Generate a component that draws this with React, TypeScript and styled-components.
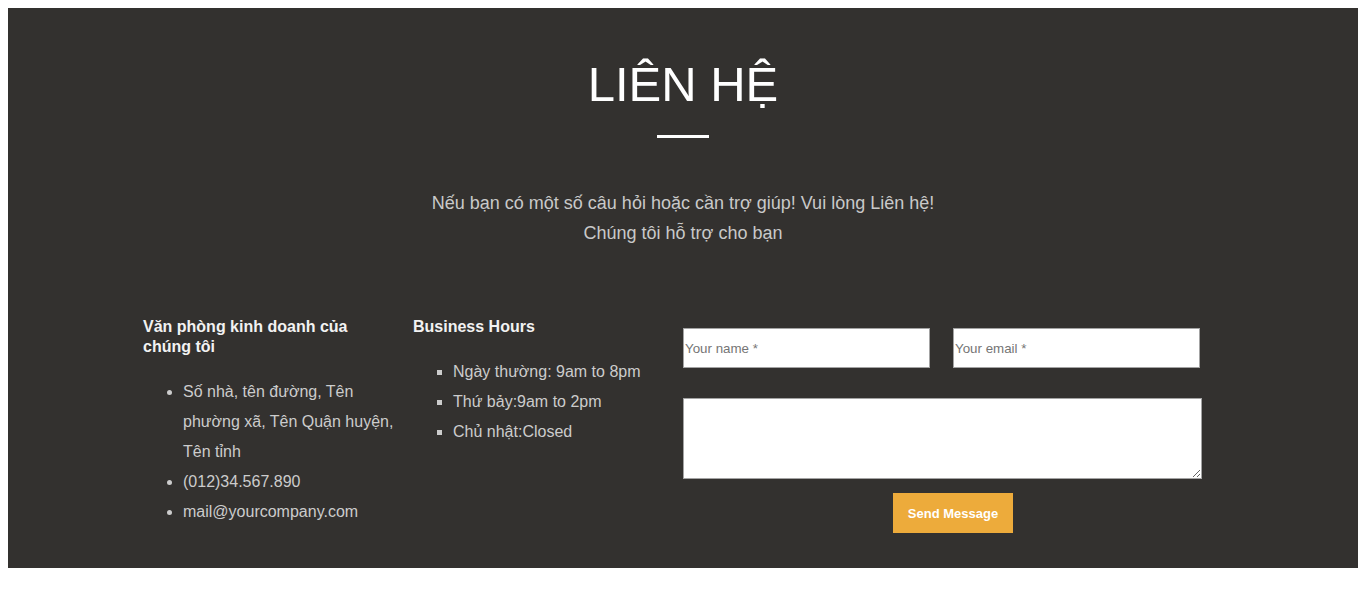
import React from "react";
import styled, { createGlobalStyle } from "styled-components";

const GlobalStyle = createGlobalStyle`
  body {
    margin: 8px 6px 8px 8px;
    background: #ffffff;
    font-family: "Liberation Sans", Arial, sans-serif;
  }
  * { box-sizing: border-box; }
`;

const Section = styled.section`
  background: #33312f;
  padding: 47px 0 35px;
  text-align: center;
`;

const Title = styled.h1`
  margin: 0;
  font-size: 49px;
  line-height: 58px;
  font-weight: 400;
  color: #ffffff;
`;

const Divider = styled.div`
  width: 52px;
  height: 3px;
  background: #ffffff;
  margin: 22px auto 0;
`;

const Lead = styled.p`
  margin: 50px 0 0;
  font-size: 18px;
  line-height: 30px;
  color: #c9c9c9;
`;

const Container = styled.div`
  width: 1080px;
  margin: 69px auto 0;
  display: grid;
  grid-template-columns: 270px 270px 540px;
  text-align: left;
`;

const Column = styled.div`
  padding-right: 15px;
`;

const Heading = styled.h4`
  margin: 0;
  font-size: 16px;
  line-height: 20px;
  font-weight: 700;
  color: #f2f2f2;
`;

const List = styled.ul<{ $bullet: string }>`
  margin: 20px 0 0;
  padding-left: 40px;
  list-style: ${(p) => p.$bullet};
  color: #cccccc;
  font-size: 16px;
  line-height: 30px;
`;

const Form = styled.form`
  margin-top: 11px;
  display: flex;
  flex-direction: column;
  align-items: center;
`;

const Row = styled.div`
  align-self: stretch;
  display: grid;
  grid-template-columns: 270px 270px;
`;

const Input = styled.input`
  width: 247px;
  height: 40px;
  border: 1px solid #a3a3a3;
  background: #ffffff;
  padding: 0 1px;
  font-family: "Liberation Sans", Arial, sans-serif;
  font-size: 13.33px;
  outline: none;
  &::placeholder { color: #757575; }
`;

const TextArea = styled.textarea`
  display: block;
  align-self: flex-start;
  width: 519px;
  height: 81px;
  margin-top: 30px;
  border: 1px solid #a3a3a3;
  background: #ffffff;
  font-family: "Liberation Sans", Arial, sans-serif;
  font-size: 13.33px;
`;

const Button = styled.button`
  margin-top: 14px;
  width: 120px;
  height: 40px;
  border: none;
  background: #edab3b;
  color: #ffffff;
  font-family: "Liberation Sans", Arial, sans-serif;
  font-size: 13px;
  font-weight: 700;
  cursor: pointer;
`;

export default function App() {
  return (
    <>
      <GlobalStyle />
      <Section>
        <Title>LIÊN HỆ</Title>
        <Divider />
        <Lead>
          Nếu bạn có một số câu hỏi hoặc cần trợ giúp! Vui lòng Liên hệ!
          <br />
          Chúng tôi hỗ trợ cho bạn
        </Lead>
        <Container>
          <Column>
            <Heading>Văn phòng kinh doanh của chúng tôi</Heading>
            <List $bullet="disc">
              <li>Số nhà, tên đường, Tên phường xã, Tên Quận huyện, Tên tỉnh</li>
              <li>(012)34.567.890</li>
              <li>mail@yourcompany.com</li>
            </List>
          </Column>
          <Column>
            <Heading>Business Hours</Heading>
            <List $bullet="square">
              <li>Ngày thường: 9am to 8pm</li>
              <li>Thứ bảy:9am to 2pm</li>
              <li>Chủ nhật:Closed</li>
            </List>
          </Column>
          <Form onSubmit={(e) => e.preventDefault()}>
            <Row>
              <Input placeholder="Your name *" />
              <Input placeholder="Your email *" />
            </Row>
            <TextArea />
            <Button type="submit">Send Message</Button>
          </Form>
        </Container>
      </Section>
    </>
  );
}
